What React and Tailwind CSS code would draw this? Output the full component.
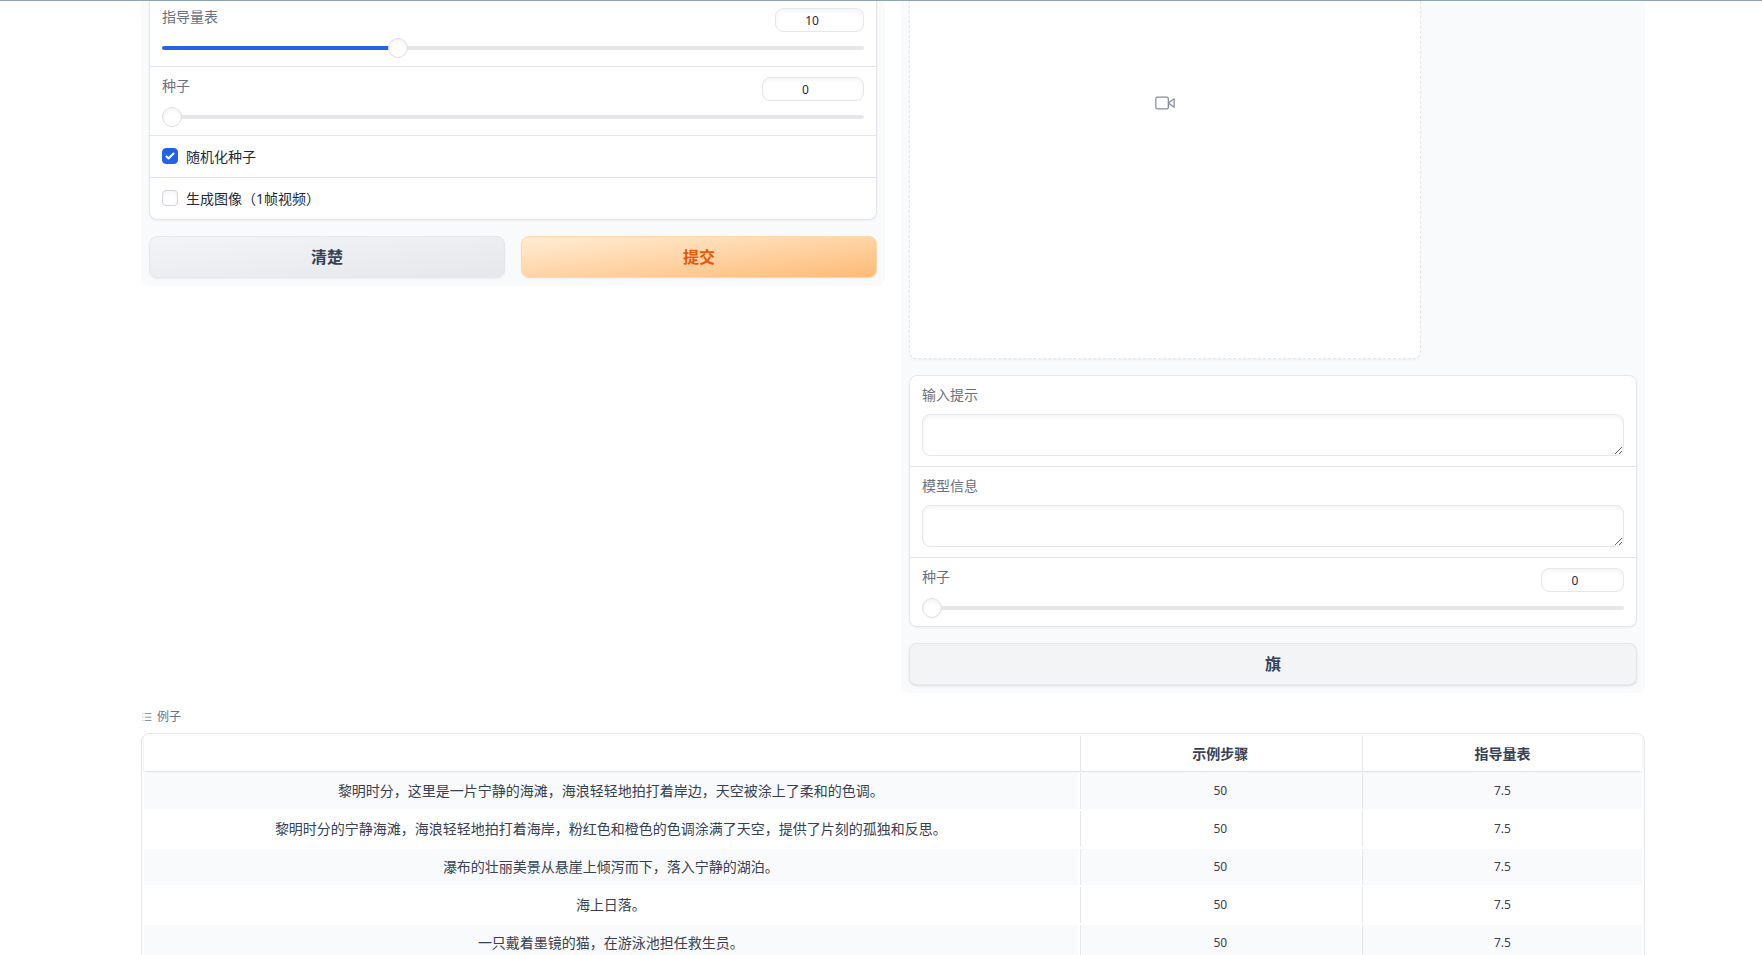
import { useId, useState } from 'react'

const examples = [
  { prompt: '黎明时分，这里是一片宁静的海滩，海浪轻轻地拍打着岸边，天空被涂上了柔和的色调。', steps: '50', scale: '7.5' },
  { prompt: '黎明时分的宁静海滩，海浪轻轻地拍打着海岸，粉红色和橙色的色调涂满了天空，提供了片刻的孤独和反思。', steps: '50', scale: '7.5' },
  { prompt: '瀑布的壮丽美景从悬崖上倾泻而下，落入宁静的湖泊。', steps: '50', scale: '7.5' },
  { prompt: '海上日落。', steps: '50', scale: '7.5' },
  { prompt: '一只戴着墨镜的猫，在游泳池担任救生员。', steps: '50', scale: '7.5' },
]

function Group({ children }) {
  return (
    <div className="divide-y divide-gray-200 rounded-lg border border-gray-200 bg-white shadow-xs">{children}</div>
  )
}

function SliderField({ label, value, onChange, min, max, step, className, numberClassName }) {
  const id = useId()
  const percent = ((value - min) / (max - min)) * 100

  return (
    <div className={`px-3 pb-2 ${className}`}>
      <div className="flex items-start justify-between">
        <label htmlFor={id} className="text-sm leading-[18px] text-gray-500">
          {label}
        </label>
        <input
          id={id}
          type="number"
          min={min}
          max={max}
          step={step}
          value={value}
          onChange={(event) => onChange(Number(event.target.value))}
          className={`h-6 rounded-lg border border-gray-200 bg-white text-center text-xs text-gray-800 inset-shadow-sm outline-none focus:border-blue-300 ${numberClassName}`}
        />
      </div>
      <input
        type="range"
        aria-label={label}
        min={min}
        max={max}
        step={step}
        value={value}
        onChange={(event) => onChange(Number(event.target.value))}
        style={{ backgroundSize: `${percent}% 100%` }}
        className="mt-[14px] mb-2 block h-1 w-full cursor-pointer appearance-none rounded-full bg-gray-200 bg-[linear-gradient(#2563eb,#2563eb)] bg-no-repeat [&::-webkit-slider-runnable-track]:h-1 [&::-webkit-slider-thumb]:-mt-2 [&::-webkit-slider-thumb]:size-5 [&::-webkit-slider-thumb]:appearance-none [&::-webkit-slider-thumb]:rounded-full [&::-webkit-slider-thumb]:border [&::-webkit-slider-thumb]:border-[#dedede] [&::-webkit-slider-thumb]:bg-white [&::-webkit-slider-thumb]:shadow-[inset_0_2px_4px_rgb(0_0_0/0.05)]"
      />
    </div>
  )
}

function CheckboxField({ label, checked, onChange }) {
  return (
    <label className="flex cursor-pointer items-start px-3 pt-3 pb-[11px] text-sm leading-[18px] text-gray-800">
      <span className="relative mr-2 size-4">
        <input
          type="checkbox"
          checked={checked}
          onChange={(event) => onChange(event.target.checked)}
          className="block size-4 appearance-none rounded-sm border border-gray-300 bg-white inset-shadow-sm checked:border-[#2563eb] checked:bg-[#2563eb]"
        />
        {checked && (
          <svg viewBox="0 0 16 16" fill="white" className="pointer-events-none absolute inset-0 size-4">
            <path d="M12.207 4.793a1 1 0 010 1.414l-5 5a1 1 0 01-1.414 0l-2-2a1 1 0 011.414-1.414L6.5 9.086l4.293-4.293a1 1 0 011.414 0z" />
          </svg>
        )}
      </span>
      {label}
    </label>
  )
}

function TextField({ label }) {
  return (
    <label className="block px-3 py-[10px]">
      <span className="mb-[10px] block text-sm leading-[18px] text-gray-500">{label}</span>
      <textarea
        rows={1}
        className="block h-[42px] w-full resize rounded-lg border border-gray-200 bg-white p-[10px] text-sm inset-shadow-sm outline-none focus:border-blue-300"
      />
    </label>
  )
}

function VideoIcon() {
  return (
    <svg
      viewBox="0 0 24 24"
      fill="none"
      stroke="currentColor"
      strokeWidth="1.5"
      strokeLinecap="round"
      strokeLinejoin="round"
      className="size-5 opacity-80"
    >
      <polygon points="23 7 16 12 23 17 23 7" />
      <rect x="1" y="5" width="15" height="14" rx="2" ry="2" />
    </svg>
  )
}

function ListIcon() {
  return (
    <svg viewBox="0 0 32 32" fill="currentColor" className="mr-1 size-3">
      <path d="M10 6h18v2H10zm0 18h18v2H10zm0-9h18v2H10zm-6 0h2v2H4zm0-9h2v2H4zm0 18h2v2H4z" />
    </svg>
  )
}

export default function App() {
  const [guidance, setGuidance] = useState(10)
  const [seed, setSeed] = useState(0)
  const [usedSeed, setUsedSeed] = useState(0)
  const [randomize, setRandomize] = useState(true)
  const [asImage, setAsImage] = useState(false)

  return (
    <div className="h-screen overflow-hidden bg-white font-['Noto_Sans','Noto_Sans_CJK_SC',sans-serif]">
      <div className="relative z-10 h-px bg-slate-400" />

      <main className="flex flex-col gap-4 pr-[117px] pl-[141px]">
        <div className="grid grid-cols-2 items-start gap-4">
          <section className="rounded-b-lg bg-gray-50 px-2 pb-2">
            <div className="divide-y divide-gray-200 rounded-b-lg border-x border-b border-gray-200 bg-white shadow-xs">
              <SliderField
                label="指导量表"
                value={guidance}
                onChange={setGuidance}
                min={0.1}
                max={30}
                step={0.1}
                className="pt-[7px]"
                numberClassName="w-[89px]"
              />
              <SliderField
                label="种子"
                value={seed}
                onChange={setSeed}
                min={0}
                max={2147483647}
                step={1}
                className="pt-[10px]"
                numberClassName="w-[102px]"
              />
              <CheckboxField label="随机化种子" checked={randomize} onChange={setRandomize} />
              <CheckboxField label="生成图像（1帧视频）" checked={asImage} onChange={setAsImage} />
            </div>

            <div className="mt-4 grid grid-cols-2 gap-4">
              <button
                type="button"
                className="h-[42px] rounded-lg border border-gray-200 bg-linear-to-br from-gray-100 to-gray-200 text-base font-semibold text-gray-700 shadow-xs"
              >
                清楚
              </button>
              <button
                type="button"
                className="h-[42px] rounded-lg border border-[#fed7aa] bg-linear-to-br from-[#ffedd5] to-[#fdba74] text-base font-semibold text-[#ea580c] shadow-xs"
              >
                提交
              </button>
            </div>
          </section>

          <section className="flex flex-col gap-4 rounded-b-lg bg-gray-50 px-2 pb-2">
            <div className="-mt-[154px] flex aspect-square w-[512px] max-w-full items-center justify-center rounded-lg border border-dashed border-gray-200 bg-white text-gray-500 shadow-xs">
              <VideoIcon />
            </div>

            <Group>
              <TextField label="输入提示" />
              <TextField label="模型信息" />
              <SliderField
                label="种子"
                value={usedSeed}
                onChange={setUsedSeed}
                min={0}
                max={100}
                step={1}
                className="pt-[10px]"
                numberClassName="w-[83px]"
              />
            </Group>

            <button
              type="button"
              className="h-[42px] rounded-lg border border-gray-200 bg-gray-100 text-base font-semibold text-gray-700 shadow-sm"
            >
              旗
            </button>
          </section>
        </div>

        <section>
          <div className="mb-2 flex items-center text-xs text-gray-500">
            <ListIcon />
            例子
          </div>
          <div className="overflow-hidden rounded-lg border border-gray-200">
            <table className="w-full table-fixed border-separate border-spacing-[2px] text-center text-sm text-gray-700">
              <thead>
                <tr className="h-[35px] shadow-sm">
                  <th className="w-[62.5%]" aria-label="输入提示" />
                  <th className="border-l border-gray-200 font-semibold">示例步骤</th>
                  <th className="border-l border-gray-200 font-semibold">指导量表</th>
                </tr>
              </thead>
              <tbody>
                {examples.map((example) => (
                  <tr key={example.prompt} className="h-9 odd:bg-gray-50">
                    <td className="pb-px">{example.prompt}</td>
                    <td className="border-l border-gray-200 text-xs">{example.steps}</td>
                    <td className="border-l border-gray-200 text-xs">{example.scale}</td>
                  </tr>
                ))}
              </tbody>
            </table>
          </div>
        </section>
      </main>
    </div>
  )
}
